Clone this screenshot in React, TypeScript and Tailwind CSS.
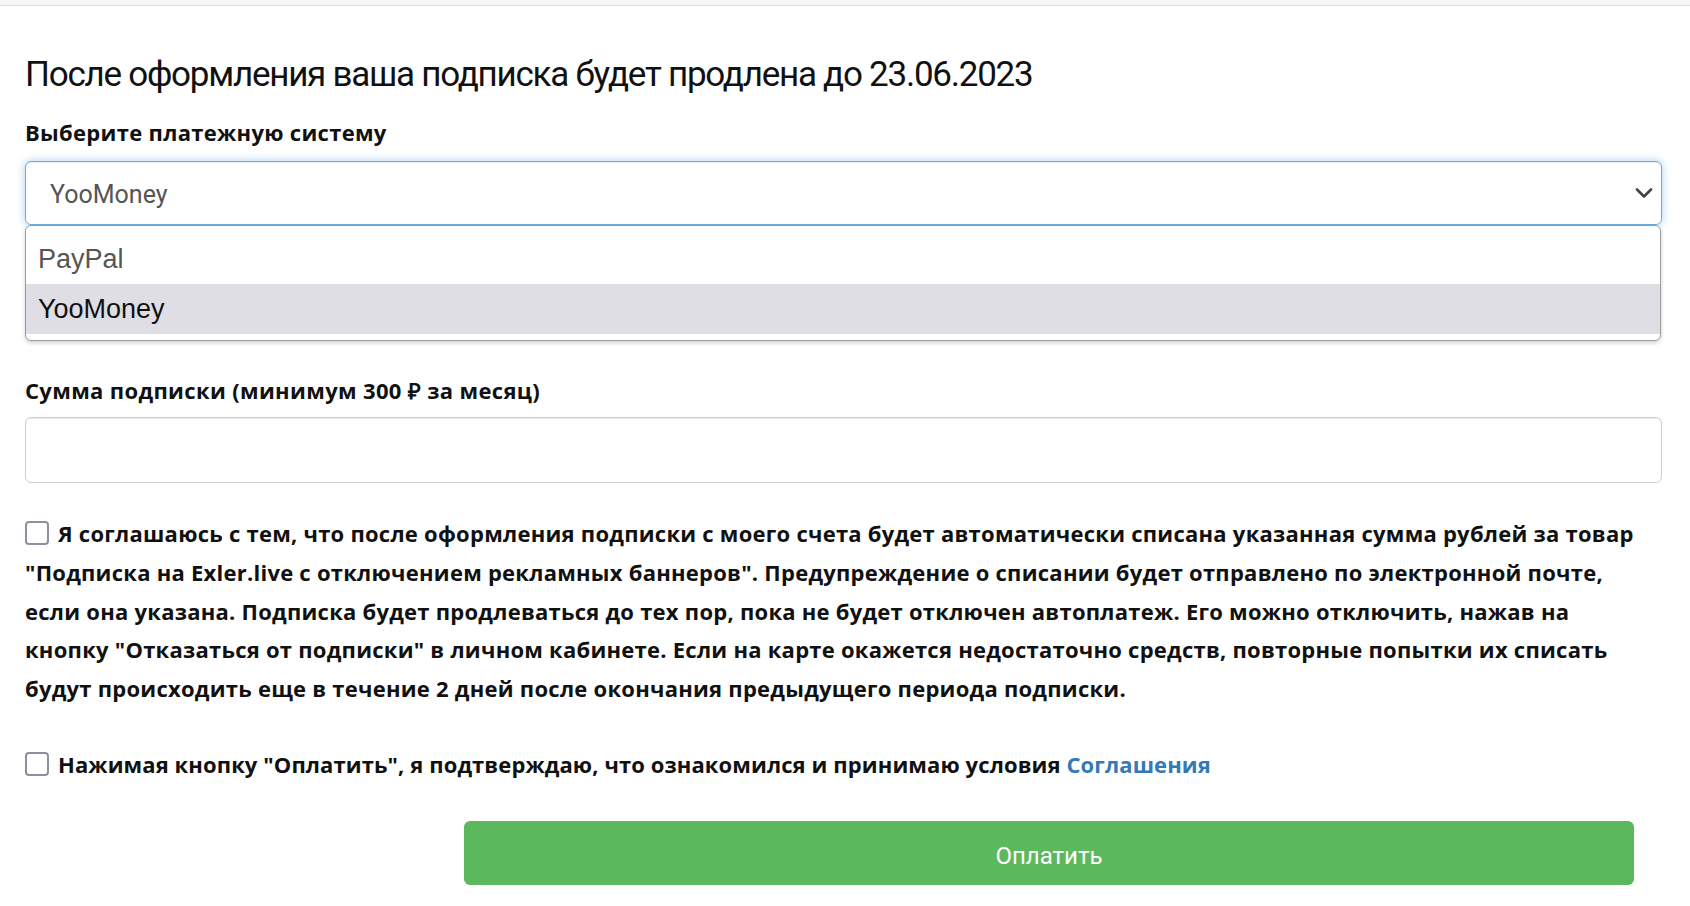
import React, { useState } from 'react';

const options = ['PayPal', 'YooMoney'];

const agreementLines = [
  'Я соглашаюсь с тем, что после оформления подписки с моего счета будет автоматически списана указанная сумма рублей за товар',
  '"Подписка на Exler.live с отключением рекламных баннеров". Предупреждение о списании будет отправлено по электронной почте,',
  'если она указана. Подписка будет продлеваться до тех пор, пока не будет отключен автоплатеж. Его можно отключить, нажав на',
  'кнопку "Отказаться от подписки" в личном кабинете. Если на карте окажется недостаточно средств, повторные попытки их списать',
  'будут происходить еще в течение 2 дней после окончания предыдущего периода подписки.',
];

const Checkbox: React.FC<{ checked: boolean; onChange: () => void }> = ({ checked, onChange }) => (
  <input
    type="checkbox"
    checked={checked}
    onChange={onChange}
    className="appearance-none m-0 mr-[9px] inline-block w-[24px] h-[24px] align-[-3px] rounded-[4px] border-2 border-[#8f8f9d] bg-white checked:bg-[#0060df] checked:border-[#0060df]"
  />
);

const App: React.FC = () => {
  const [method, setMethod] = useState('YooMoney');
  const [open, setOpen] = useState(true);
  const [amount, setAmount] = useState('');
  const [agreeAuto, setAgreeAuto] = useState(false);
  const [agreeTerms, setAgreeTerms] = useState(false);

  return (
    <div className="min-h-screen bg-white font-['Roboto',sans-serif] text-[#111]">
      <div className="h-[6px] bg-[#f7f7f7] border-b border-[#e2e2e2]" />

      <div className="ml-[25px] w-[1637px]">
        <h1 className="mt-[49px] text-[35px] leading-[40px] tracking-[-1.25px] font-normal whitespace-nowrap">
          После оформления ваша подписка будет продлена до 23.06.2023
        </h1>

        <label className="block mt-[24px] font-['Open_Sans',sans-serif] text-[22px] leading-[26px] tracking-[0.3px] font-bold whitespace-nowrap">
          Выберите платежную систему
        </label>

        <div className="relative mt-[16px]">
          <button
            type="button"
            onClick={() => setOpen((v) => !v)}
            className="flex w-full h-[64px] items-center justify-between rounded-[6px] border border-[#66afe9] bg-white pl-[24px] pr-[6px] shadow-[inset_0_1px_1px_rgba(0,0,0,0.075),0_0_8px_rgba(102,175,233,0.6)]"
          >
            <span className="pt-[4px] text-[25px] leading-[30px] text-[#555]">{method}</span>
            <svg width="20" height="12" viewBox="0 0 20 12" className="mr-[1px]">
              <polyline points="3,2.5 10,9.5 17,2.5" fill="none" stroke="#444" strokeWidth="2.6" strokeLinecap="round" strokeLinejoin="round" />
            </svg>
          </button>

          {open && (
            <ul className="absolute left-0 top-[64px] z-10 w-[1636px] rounded-[6px] border border-[#9c9c9c] bg-white pt-[8px] pb-[6px] shadow-[0_2px_4px_rgba(0,0,0,0.18)] font-['Liberation_Sans',Arial,sans-serif]">
              {options.map((o) => (
                <li
                  key={o}
                  onClick={() => {
                    setMethod(o);
                    setOpen(false);
                  }}
                  className={`flex h-[50px] items-center pl-[12px] text-[27px] leading-[30px] ${
                    o === method ? 'bg-[#dfdee4] text-[#111]' : 'text-[#555]'
                  }`}
                >
                  {o}
                </li>
              ))}
            </ul>
          )}
        </div>

        <label className="block mt-[152px] font-['Open_Sans',sans-serif] text-[22px] leading-[26px] tracking-[0.35px] font-bold whitespace-nowrap">
          Сумма подписки (минимум 300 ₽ за месяц)
        </label>
        <input
          type="text"
          value={amount}
          onChange={(e) => setAmount(e.target.value)}
          className="mt-[14px] block w-full h-[66px] rounded-[6px] border border-[#cfcfcf] bg-white px-[24px] text-[24px] shadow-[inset_0_1px_1px_rgba(0,0,0,0.075)] focus:outline-none"
        />

        <div className="mt-[31px] font-['Open_Sans',sans-serif] text-[22px] leading-[38.8px] tracking-[0.25px] font-bold">
          {agreementLines.map((line, i) => (
            <div key={i} className="whitespace-nowrap">
              {i === 0 && <Checkbox checked={agreeAuto} onChange={() => setAgreeAuto((v) => !v)} />}
              {line}
            </div>
          ))}
        </div>

        <div className="mt-[37px] font-['Open_Sans',sans-serif] text-[22px] leading-[38.8px] tracking-[0.1px] font-bold whitespace-nowrap">
          <Checkbox checked={agreeTerms} onChange={() => setAgreeTerms((v) => !v)} />
          Нажимая кнопку "Оплатить", я подтверждаю, что ознакомился и принимаю условия{' '}
          <a href="#" className="text-[#337ab7] no-underline">
            Соглашения
          </a>
        </div>

        <button
          type="button"
          className="mt-[37px] ml-[439px] block w-[1170px] h-[64px] rounded-[6px] bg-[#5cb85c] pt-[6px] text-[24px] text-white"
        >
          Оплатить
        </button>
      </div>
    </div>
  );
};

export default App;
